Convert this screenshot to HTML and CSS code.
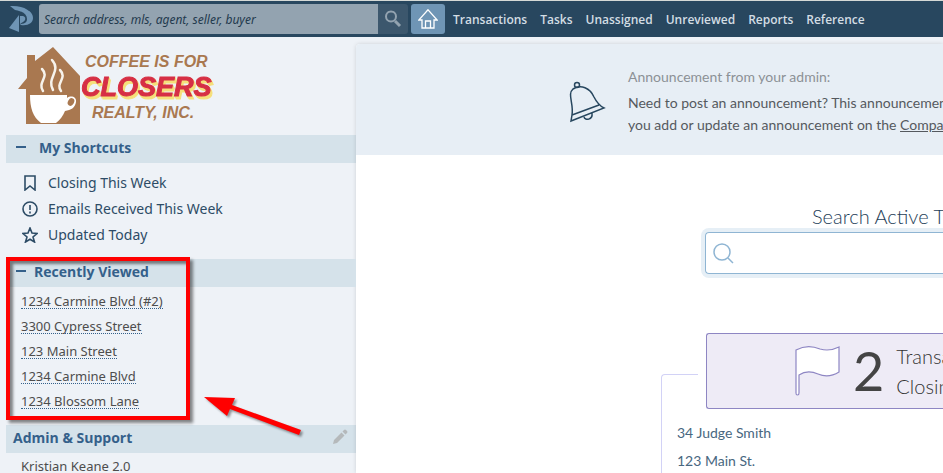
FILE: index.html
```html
<!DOCTYPE html>
<html lang="en">
<head>
<meta charset="utf-8">
<title>Dashboard</title>
<link rel="stylesheet" href="styles.css">
</head>
<body>
<header class="topbar">
  <svg class="brand" viewBox="0 0 26 28" aria-hidden="true">
    <path d="M2 1C15 0 25 6 25 13c0 5-5 8-12 7l-1-1c5 0 7-2 7-5C19 9 14 6 7 5z"/>
    <path d="M11 10v17L1 23z"/>
    <path d="M12 11h3c3 1 3 4 0 6l-3 2z"/>
  </svg>
  <form class="find">
    <input class="find-input" type="search" aria-label="Search" placeholder="Search address, mls, agent, seller, buyer">
    <button class="find-button" type="button" aria-label="Search">
      <svg width="18" height="18" viewBox="0 0 18 18" fill="none" stroke="#93a3b0"><circle cx="7" cy="6.500" r="5" stroke-width="2"/><path d="M11 11l5 5" stroke-width="3"/></svg>
    </button>
  </form>
  <a class="home" href="#" aria-label="Home">
    <svg width="20" height="20" viewBox="0 0 20 20" fill="none" stroke="#fff" stroke-width="1.300"><path d="M10 .8L.8 11H4v8h12v-8h3.200zM7.500 19v-7h5v7"/></svg>
  </a>
  <nav class="menu">
    <a href="#">Transactions</a><a href="#">Tasks</a><a href="#">Unassigned</a><a href="#">Unreviewed</a><a href="#">Reports</a><a href="#">Reference</a>
  </nav>
</header>
<div class="page">
  <aside class="sidebar">
    <div class="logo">
      <svg width="196" height="80" viewBox="0 0 196 80" role="img" aria-label="Coffee is for Closers Realty, Inc.">
        <path d="M9 8h8v6L35 0l27 29v48H8V42H0l9-11z" fill="#a97850"/>
        <path d="M12 48h37v3c4-3 10-1 9 4-1 6-5 8-11 9-2 5-5 9-9 12H23c-8-6-11-15-11-28z" fill="#fff"/>
        <ellipse cx="53" cy="55" rx="3" ry="4" fill="#a97850" transform="rotate(30 53 55)"/>
        <g fill="none" stroke="#f7f3ec" stroke-width="2.500" stroke-linecap="round"><path d="M24 22c8 8-5 13 1 22M34 13c10 11-6 18 1 30M42 23c8 8-5 13 1 21"/></g>
        <g class="logo-small"><text x="67" y="20">COFFEE IS FOR</text><text x="74" y="71">REALTY, INC.</text></g>
        <text class="logo-big" x="63" y="49">CLOSERS</text>
      </svg>
    </div>
    <section>
      <h2 class="bar bar-wide"><i class="minus"></i>My Shortcuts</h2>
      <ul class="shortcuts">
        <li><svg viewBox="0 0 16 16"><path d="M3 1h10v14l-5-4-5 4z"/></svg><a href="#">Closing This Week</a></li>
        <li><svg viewBox="0 0 16 16"><circle cx="8" cy="8" r="7"/><path d="M8 4v5M8 10.500v2"/></svg><a href="#">Emails Received This Week</a></li>
        <li><svg viewBox="0 0 16 16"><path d="M8 1l2 5 5 .5-4 3.500 1.500 5L8 12.200 3.500 15 5 10 1 6.500 6 6z"/></svg><a href="#">Updated Today</a></li>
      </ul>
    </section>
    <section class="recent">
      <h2 class="bar"><i class="minus"></i>Recently Viewed</h2>
      <ul class="links">
        <li><a href="#">1234 Carmine Blvd (#2)</a></li>
        <li><a href="#">3300 Cypress Street</a></li>
        <li><a href="#">123 Main Street</a></li>
        <li><a href="#">1234 Carmine Blvd</a></li>
        <li><a href="#">1234 Blossom Lane</a></li>
      </ul>
      <div class="marker"></div>
      <svg class="arrow" width="106" height="46" viewBox="0 0 106 46" aria-hidden="true"><path d="M2 2l31 1-3 7 69 25-2 5-69-26-3 7z" fill="#f00"/></svg>
    </section>
    <section>
      <h2 class="bar bar-plain">Admin &amp; Support
        <svg class="pencil" width="16" height="16" viewBox="0 0 16 16" fill="#b5b9bb" aria-hidden="true"><path d="M1 15l1-4 7.500-7.500 3 3L5 14zM10.500 2.500L12 1q1-1 2 0l1 1q1 1 0 2l-1.500 1.500z"/></svg>
      </h2>
      <p class="support">Kristian Keane 2.0</p>
    </section>
  </aside>
  <main class="content">
    <section class="notice">
      <svg class="bell" width="38" height="42" viewBox="0 0 38 42" fill="none" stroke="#28475f" stroke-width="1.500" aria-hidden="true">
        <circle cx="8" cy="4" r="2.500"/>
        <path d="M3 34C5 23-2 13 4 8c8-5 17-1 21 8 2 4 4 8 10 11L2 40zM3 34l27-10M15 36c1 4 9 3 8-4"/>
      </svg>
      <div class="notice-text">
        <h3>Announcement from your admin:</h3>
        <p>Need to post an announcement? This announcement<br>you add or update an announcement on the <a href="#">Company</a></p>
      </div>
    </section>
    <section class="lookup">
      <label for="lookup">Search Active Transactions</label>
      <div class="lookup-box">
        <svg width="21" height="21" viewBox="0 0 21 21" fill="none" stroke="#8fb5d3" stroke-width="1.500" aria-hidden="true"><circle cx="9" cy="9" r="8"/><path d="M15 15l5 5"/></svg>
        <input id="lookup" type="text">
      </div>
    </section>
    <section class="card">
      <div class="stat">
        <svg width="46" height="52" viewBox="0 0 46 52" fill="#fff" stroke="#8e86c3" stroke-width="1.200" aria-hidden="true"><path d="M1 5c9-5 17-4 24-1 7 2 13 1 19-2v25c-8 5-14 5-21 2s-13-3-19 1v18q0 2-1.500 2T1 48z"/></svg>
        <strong>2</strong>
        <span>Transactions<br>Closing</span>
      </div>
      <ul class="deals"><li><a href="#">34 Judge Smith</a></li><li><a href="#">123 Main St.</a></li></ul>
    </section>
  </main>
</div>
</body>
</html>
```
FILE: styles.css
```css
* { box-sizing: border-box; }
body {
  margin: 0;
  height: 100vh;
  display: flex;
  flex-direction: column;
  overflow: hidden;
  background: #eef2f7;
  font-family: "Noto Sans", sans-serif;
}
a { color: inherit; text-decoration: none; }
h2, h3, p, ul { margin: 0; padding: 0; }
ul { list-style: none; }
svg { flex: none; }

.topbar {
  flex: none;
  display: flex;
  align-items: center;
  height: 37px;
  padding-left: 8px;
  border-top: 1px solid #d5d9d6;
  background: #28475f;
}
.brand { width: 26px; height: 28px; fill: #6f95b5; }
.find { display: flex; margin: 0 3px 0 5px; flex: 0 0 369px; height: 30px; }
.find-input {
  flex: 1;
  min-width: 0;
  border: 0;
  border-radius: 3px 0 0 3px;
  padding: 0 5px;
  background: #93a3b0;
  font: italic 12px "Noto Sans", sans-serif;
}
.find-input::placeholder { color: #233a4e; opacity: 1; }
.find-button {
  width: 30px;
  padding: 0;
  border: 0;
  border-radius: 0 3px 3px 0;
  background: #3c576d;
  display: grid;
  place-items: center;
}
.home {
  width: 34px;
  height: 30px;
  border-radius: 3px;
  background: #6f95b5;
  display: grid;
  place-items: center;
}
.menu { display: flex; gap: 13px; margin-left: 8px; font: 600 12px "Open Sans", sans-serif; color: #d3dde4; }

.page { flex: 1; display: flex; min-height: 0; }
.sidebar { flex: 0 0 356px; padding-left: 6px; color: #2d4c66; }
.logo { height: 98px; padding: 10px 0 0 12px; }
.logo text { font-family: "Liberation Sans", sans-serif; font-weight: 700; font-style: italic; }
.logo-small { font-size: 16px; fill: #a97850; }
.logo .logo-big {
  font-size: 27px;
  fill: #d62f45;
  stroke: #d62f45;
  filter: drop-shadow(1px 2px 0 #f5df7a) drop-shadow(1px 1px 0 #f5df7a);
}
.bar {
  display: flex;
  align-items: center;
  gap: 8px;
  height: 28px;
  padding: 0 8px 4px 10px;
  background: #d5e2ea;
  color: #34608a;
  font: 700 14px "Open Sans", sans-serif;
}
.bar-wide { gap: 13px; }
.bar-plain { justify-content: space-between; padding-left: 7px; }
.minus { width: 10px; height: 2px; background: #34608a; }
.shortcuts { padding: 7px 0 11px 16px; font-size: 14px; }
.shortcuts li { display: flex; align-items: center; gap: 10px; height: 26px; }
.shortcuts a { line-height: 20px; }
.shortcuts svg { width: 16px; height: 16px; fill: none; stroke: #2d4c66; stroke-width: 1.6; }
.recent { position: relative; }
.links { padding: 1px 0 12px 15px; font-size: 13px; line-height: 14px; color: #4d4d4d; }
.links li { height: 25px; padding-top: 6px; }
.links a { display: inline-block; border-bottom: 1px dotted #34608a; }
.marker {
  position: absolute;
  left: 0;
  top: -2px;
  width: 184px;
  height: 163px;
  border: 4px solid #f00;
  box-shadow: 3px 3px 3px #0007, inset 3px 3px 3px #0007;
}
.arrow { position: absolute; left: 196px; top: 136px; filter: drop-shadow(2px 2px 1px #0006); }
.support { padding: 4px 15px; font-size: 13px; line-height: 18px; color: #4d4d4d; }

.content {
  flex: 1;
  min-width: 0;
  margin-top: 7px;
  overflow: hidden;
  background: #fff;
  box-shadow: 0 0 4px #0002;
  border-radius: 4px 0 0 0;
  font-family: Lato, sans-serif;
  font-weight: 300;
  white-space: nowrap;
}
.notice { display: flex; gap: 21px; height: 111px; padding: 22px 0 0 213px; background: #e7eef5; }
.bell { margin-top: 15px; }
.notice-text { font-size: 14px; font-weight: 400; line-height: 22px; color: #55595e; }
.notice h3 { font-size: 14px; font-weight: 400; color: #8c9196; margin-bottom: 4px; }
.notice a { text-decoration: underline; }
.lookup { padding: 48px 0 0 349px; }
.lookup label { display: block; padding-left: 107px; font-size: 20px; line-height: 26px; color: #1e3e58; }
.lookup-box {
  display: flex;
  align-items: center;
  margin-top: 3px;
  height: 42px;
  padding-left: 7px;
  border: 1px solid #8fb5d3;
  border-right: 0;
  border-radius: 4px 0 0 4px;
  box-shadow: 0 0 0 4px #e6eff6;
}
.lookup input { flex: 1; min-width: 0; border: 0; outline: 0; background: none; font: 16px Lato, sans-serif; }
.card {
  margin: 100px 0 0 305px;
  height: 200px;
  border: 1px solid #d2d2f6;
  border-right: 0;
  border-radius: 4px 0 0 0;
}
.stat {
  display: flex;
  align-items: center;
  gap: 12px;
  height: 76px;
  margin: -42px 0 0 44px;
  padding-left: 88px;
  border: 1px solid #8e86c3;
  border-right: 0;
  border-radius: 3px 0 0 3px;
  background: #eeebf6;
  box-shadow: 0 0 0 8px #fff;
  color: #333;
}
.stat strong { font-size: 54px; font-weight: 400; line-height: 60px; color: #444; }
.stat span { font-size: 20px; line-height: 30px; }
.deals { padding: 10px 15px; font-size: 14px; font-weight: 400; line-height: 28px; color: #48677f; }
```
